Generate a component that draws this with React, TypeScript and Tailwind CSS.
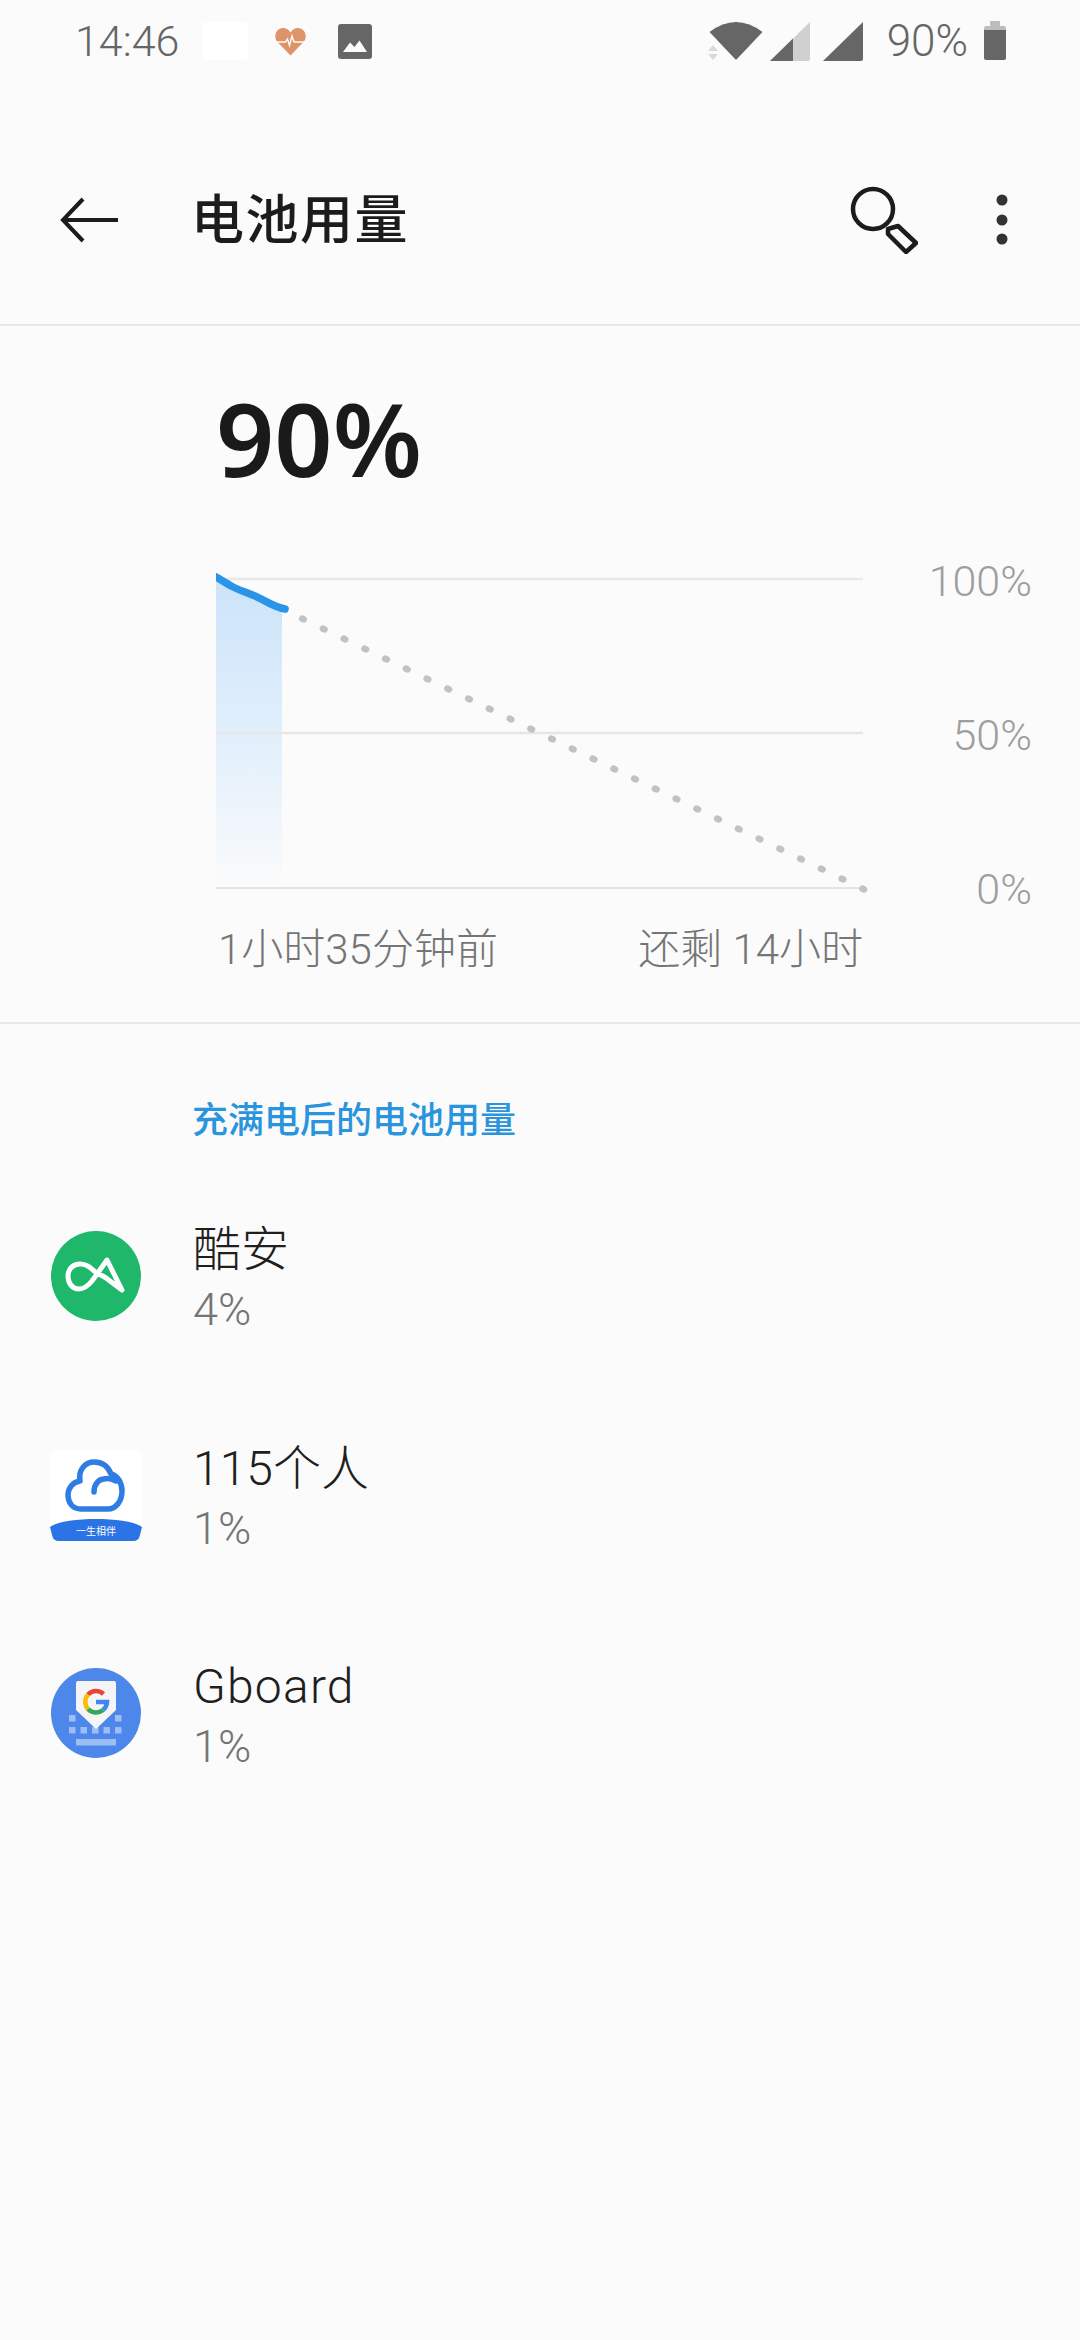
import React from 'react';

const FONT = 'font-["Roboto","Noto_Sans_CJK_SC",sans-serif]';

function WifiIcon() {
  return (
    <svg width="56" height="44" viewBox="0 0 56 44" className="block">
      <path d="M28 41 L1.5 13 Q28 -7 54.5 13 Z" fill="#666666" />
      <path d="M5 26 L10 32 H0 Z M0 35 H10 L5 41 Z" fill="#d9d9d9" />
    </svg>
  );
}

function SignalIcon({ partial }: { partial?: boolean }) {
  return (
    <svg width="41" height="41" viewBox="0 0 41 41" className="block">
      <path d="M0 40 L40 1 V38 Q40 40 38 40 Z" fill={partial ? '#cfcfcf' : '#666666'} />
      {partial && <path d="M0 40 L23 17.5 V40 Z" fill="#666666" />}
    </svg>
  );
}

function BatteryIcon() {
  return (
    <svg width="22" height="40" viewBox="0 0 22 40" className="block">
      <path d="M6 0 H16 V5 H20 Q22 5 22 7 V9 H0 V7 Q0 5 2 5 H6 Z" fill="#bdbdbd" />
      <path d="M0 9 H22 V37 Q22 39 20 39 H2 Q0 39 0 37 Z" fill="#666666" />
    </svg>
  );
}

function HeartIcon() {
  return (
    <svg width="31" height="29" viewBox="0 0 31 29" className="block">
      <path d="M15.5 28.5 L2 14.5 C-2 9 1.5 1 8 1 C11.5 1 14 2.8 15.5 5.5 C17 2.8 19.5 1 23 1 C29.5 1 33 9 29 14.5 Z" fill="#de9468" />
      <path d="M1 15 H10.5 L12.5 12 L14.5 18.5 L17 9 L19 15 H30" fill="none" stroke="#fbfbfb" strokeWidth="1.4" />
    </svg>
  );
}

function ImageIcon() {
  return (
    <svg width="34" height="35" viewBox="0 0 34 35" className="block">
      <rect width="34" height="35" rx="3" fill="#666666" />
      <path d="M5 28 L12 18.5 L16.5 23 L21.5 16.5 L29 28 Z" fill="#fbfbfb" />
    </svg>
  );
}

function BackIcon() {
  return (
    <svg width="60" height="48" viewBox="0 0 60 48" className="block">
      <path d="M58 24 H3 M23 3 L3 24 L23 45" fill="none" stroke="#1c1c1c" strokeWidth="4" />
    </svg>
  );
}

function SearchIcon() {
  return (
    <svg width="68" height="68" viewBox="0 0 68 68" className="block">
      <circle cx="23" cy="23" r="20" fill="none" stroke="#1c1c1c" strokeWidth="4.5" />
      <path d="M38 43 L48 40 L66 57 L56 66 L38 48 Z" fill="none" stroke="#1c1c1c" strokeWidth="4.5" strokeLinejoin="round" />
    </svg>
  );
}

function MoreIcon() {
  return (
    <svg width="12" height="52" viewBox="0 0 12 52" className="block">
      <circle cx="6" cy="6" r="5.5" fill="#333333" />
      <circle cx="6" cy="26" r="5.5" fill="#333333" />
      <circle cx="6" cy="45" r="5.5" fill="#333333" />
    </svg>
  );
}

// Projected drain after the charge, one dot every ~23px along the slope
const dots = Array.from({ length: 28 }, (_, i) => ({ x: 87 + i * 20.75, y: 49 + i * 10 }));

function BatteryChart() {
  return (
    <svg width="660" height="330" viewBox="0 0 660 330" className="block">
      <defs>
        <linearGradient id="drain" x1="0" y1="0" x2="0" y2="1">
          <stop offset="0" stopColor="#cbe3f9" />
          <stop offset="0.55" stopColor="#e3f0fc" />
          <stop offset="1" stopColor="#fbfbfb" />
        </linearGradient>
      </defs>
      <path d="M0 5 C6 10 11 13 17 17 C25 21 33 23 41 27 C50 32 58 37 66 39 V320 H0 Z" fill="url(#drain)" />
      <path d="M0 9 H647" stroke="#e9e9e9" strokeWidth="2.5" />
      <path d="M0 163 H647" stroke="#e6e6e6" strokeWidth="2.5" />
      <path d="M0 318 H647" stroke="#e4e4e4" strokeWidth="2" />
      <path d="M-2 6 C6 10 11 14 17 17 C25 21 33 23 41 27 C50 31 58 37 69 39" fill="none" stroke="#2a94e8" strokeWidth="7.5" strokeLinecap="round" />
      {dots.map((d) => (
        <ellipse key={d.x} cx={d.x} cy={d.y} rx="4.2" ry="3.4" fill="#c0c3c5" transform={`rotate(25 ${d.x} ${d.y})`} />
      ))}
    </svg>
  );
}

function CoolapkIcon() {
  return (
    <svg width="90" height="90" viewBox="0 0 90 90" className="block">
      <circle cx="45" cy="45" r="45" fill="#1fb86a" />
      <path d="M71 59 L56 29 L41 50 C36 56 32 58 28 58 C21 58 17 52 17 45 C17 38 22 33 29 33 C34 33 38 35 42 39 C45 42 50 44 55 47 L71 59" fill="none" stroke="#ffffff" strokeWidth="5" strokeLinejoin="round" strokeLinecap="round" />
    </svg>
  );
}

function Cloud115Icon() {
  return (
    <svg width="92" height="92" viewBox="0 0 92 92" className="block">
      <rect width="92" height="92" rx="8" fill="#ffffff" />
      <path d="M31 60 C22 60 18 53 18 46 C18 39 23 33 30 32 C28 20 36 13 44 13 C52 13 58 17 61 25 C68 27 72 34 72 42 C72 52 66 60 58 60 Z" fill="none" stroke="#2f7de2" strokeWidth="5.5" strokeLinejoin="round" />
      <path d="M44 43 C44 35 49 30 54 30 C58 29 62 30 66 32" fill="none" stroke="#2f7de2" strokeWidth="5.5" strokeLinecap="round" />
      <path d="M0 78 C6 73 26 70 46 70 C66 70 86 73 92 78 L90 86 Q89 92 83 92 H9 Q3 92 2 86 Z" fill="#2a74e6" />
      <text x="46" y="86" textAnchor="middle" fontSize="10" fill="#ffffff" fontFamily="'Noto Sans CJK SC', sans-serif">一生相伴</text>
    </svg>
  );
}

function GboardIcon() {
  const keys = [18, 29.5, 41, 52.5, 64];
  return (
    <svg width="90" height="90" viewBox="0 0 90 90" className="block">
      <circle cx="45" cy="45" r="45" fill="#4d87ea" />
      {[18, 64].map((k) => (
        <rect key={k} x={k} y="47" width="6.5" height="6.5" fill="#9dbdf5" />
      ))}
      {keys.map((k) => (
        <rect key={k} x={k} y="59" width="6.5" height="6.5" fill="#9dbdf5" />
      ))}
      <rect x="25" y="71" width="40" height="6.5" fill="#9dbdf5" />
      <path d="M25 15 Q25 13 27 13 H63 Q65 13 65 15 V42 L45 61 L25 42 Z" fill="#f5f5f5" />
      <g fill="none" strokeWidth="4.6">
        <path d="M52.5 26 A11 11 0 0 0 37 26.5" stroke="#ea4335" />
        <path d="M37 26.5 A11 11 0 0 0 37 41" stroke="#fbbc05" />
        <path d="M37 41 A11 11 0 0 0 52 42" stroke="#34a853" />
        <path d="M52 42 A11 11 0 0 0 56 34 H45" stroke="#4285f4" />
      </g>
    </svg>
  );
}

const apps = [
  { name: '酷安', percent: '4%', icon: <CoolapkIcon />, nameClass: '' },
  { name: '115个人', percent: '1%', icon: <Cloud115Icon />, nameClass: '' },
  { name: 'Gboard', percent: '1%', icon: <GboardIcon />, nameClass: 'tracking-[1.2px]' },
];

export default function App() {
  return (
    <div className={`w-[1080px] h-[2340px] overflow-hidden bg-[#fbfbfb] ${FONT}`}>
      {/* Status bar */}
      <div className="h-[80px] pt-[2px] pl-[75px] pr-[74px] flex items-center justify-between">
        <div className="flex items-center">
          <span className="w-[104px] text-[43px] leading-none font-light text-[#666666]">14:46</span>
          <div className="ml-[24px] w-[45px] h-[38px] bg-white rounded-sm" />
          <div className="ml-[27px]"><HeartIcon /></div>
          <div className="ml-[32px]"><ImageIcon /></div>
        </div>
        <div className="flex items-center">
          <WifiIcon />
          <div className="ml-[6px]"><SignalIcon partial /></div>
          <div className="ml-[12px]"><SignalIcon /></div>
          <span className="ml-[23px] text-[44px] leading-none font-light text-[#666666]">90%</span>
          <div className="ml-[16px]"><BatteryIcon /></div>
        </div>
      </div>

      {/* Toolbar */}
      <div className="h-[246px] pt-[36px] pl-[60px] pr-[72px] flex items-center border-b-2 border-[#e8e8e8]">
        <BackIcon />
        <h1 className="ml-[71px] mt-[2px] text-[53px] leading-none tracking-[1.5px] font-medium text-[#1c1c1c]">电池用量</h1>
        <div className="ml-auto mr-[78px]"><SearchIcon /></div>
        <MoreIcon />
      </div>

      {/* Level and chart */}
      <div className="h-[698px] border-b-2 border-[#e8e8e8] pl-[216px] pr-[48px]">
        <div className="pt-[54px] h-[244px] text-[102px] leading-[116px] font-semibold font-['Noto_Sans',sans-serif] text-[#1a1a1a]">90%</div>
        <div className="flex h-[330px]">
          <div className="w-[660px]">
            <BatteryChart />
          </div>
          <div className="flex-1 h-[352px] -mt-[11px] flex flex-col justify-between items-end text-[43px] leading-[44px] font-light text-[#9e9e9e]">
            <span>100%</span>
            <span>50%</span>
            <span>0%</span>
          </div>
        </div>
        <div className="w-[647px] mt-[26px] pl-[2px] flex justify-between text-[42px] leading-[48px] font-light text-[#757575]">
          <span>1小时35分钟前</span>
          <span>还剩 14小时</span>
        </div>
      </div>

      {/* Usage since full charge */}
      <div className="pl-[192px] pt-[74px] text-[36px] leading-[46px] font-medium text-[#2a94dd]">充满电后的电池用量</div>
      <div className="mt-[23px] pl-[50px]">
        {apps.map((app) => (
          <div key={app.name} className="h-[218.5px] flex items-center">
            <div className="w-[92px] flex justify-center">{app.icon}</div>
            <div className="ml-[51px] mt-[8px]">
              <div className={`text-[48px] leading-[60px] text-[#1f1f1f] font-light ${app.nameClass}`}>{app.name}</div>
              <div className="text-[45px] leading-[60px] font-light text-[#757575]">{app.percent}</div>
            </div>
          </div>
        ))}
      </div>
    </div>
  );
}
